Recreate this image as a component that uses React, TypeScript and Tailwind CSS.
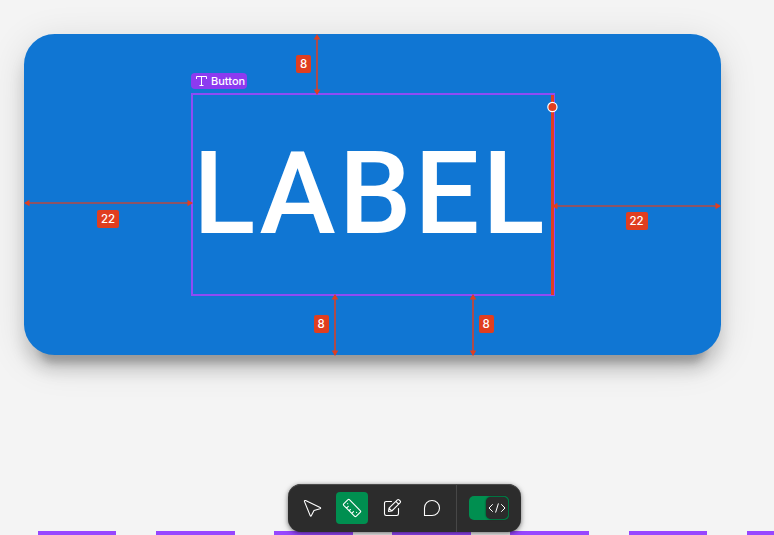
import type { ReactNode } from "react";

const RED = "#e03e1f";

function Badge({ children, className }: { children: ReactNode; className: string }) {
  return (
    <span
      className={`absolute flex h-[17.5px] items-center justify-center rounded-[2px] bg-[#e03e1f] pt-px font-['Inter'] text-[11.5px] font-medium text-white ${className}`}
    >
      {children}
    </span>
  );
}

function VArrow({ length, className }: { length: number; className: string }) {
  return (
    <svg className={`absolute ${className}`} width="8" height={length} fill={RED}>
      <rect x="3" y="3" width="2" height={length - 6} opacity="0.75" />
      <path d={`M4 0L7.3 5.5H0.7ZM4 ${length}L0.7 ${length - 5.5}H7.3Z`} />
    </svg>
  );
}

function HArrow({ length, className }: { length: number; className: string }) {
  return (
    <svg className={`absolute ${className}`} width={length} height="8" fill={RED}>
      <rect x="3" y="3.2" width={length - 6} height="1.6" opacity="0.75" />
      <path d={`M0 4L5.5 0.7V7.3ZM${length} 4L${length - 5.5} 0.7V7.3Z`} />
    </svg>
  );
}

function Tool({ active, children }: { active?: boolean; children: ReactNode }) {
  return (
    <button className={`flex size-8 items-center justify-center rounded-[4px] ${active ? "bg-[#008f50]" : ""}`}>
      <svg width="24" height="24" viewBox="0 0 24 24" fill="none" stroke="#fff" strokeWidth="1.1" strokeLinecap="round" strokeLinejoin="round">
        {children}
      </svg>
    </button>
  );
}

function Toolbar() {
  return (
    <div className="absolute top-[484px] left-[288px] flex h-12 w-[233px] items-center rounded-[13px] bg-[#2c2c2c] pl-2 shadow-[inset_0_1px_0_#4a4a4a,0_1px_4px_rgba(0,0,0,0.45),0_3px_8px_rgba(0,0,0,0.15)]">
      <div className="flex gap-2">
        <Tool>
          <path d="M4.5 5.6L10.2 19.6Q10.7 20.7 11.4 19.6L14 14.6L20 12.7Q21.2 12.2 20.1 11.5L5.6 4.6Q4.1 4.1 4.5 5.6Z" />
        </Tool>
        <Tool active>
          <path d="M8 3.7Q8.7 3.1 9.4 3.7L20.4 14.8Q21 15.5 20.4 16.1L16.1 20.3Q15.4 20.9 14.7 20.3L3.7 9.3Q3.1 8.6 3.7 7.9ZM6.6 12.1L8.3 10.4M9.2 14.7L10.4 13.5M11.8 17.3L13.5 15.6M7.7 7.6V7.7M16.6 16.4V16.5" />
        </Tool>
        <Tool>
          <path d="M11.5 5.5H6.2Q4.5 5.5 4.5 7.2V17.8Q4.5 19.5 6.2 19.5H16.8Q18.5 19.5 18.5 17.8V12.5M8.5 15.5L9 12.2L17.4 3.8Q18.2 3.1 19 3.8L20.2 5Q20.9 5.8 20.2 6.6L11.8 15L8.5 15.5ZM9 12.2L11.8 15M15.8 5.4L18.6 8.2" />
        </Tool>
        <Tool>
          <path d="M4.5 19.5V12A7.5 7.5 0 1 1 12 19.5Z" />
        </Tool>
      </div>
      <div className="ml-2 h-full w-px bg-[#474747]" />
      <div className="ml-3 flex h-6 w-10 justify-end rounded-[5px] bg-[#008f50] p-px">
        <div className="flex w-[22px] items-center justify-center rounded-[5px] bg-[#2c2c2c] shadow-[0_0_2px_rgba(0,0,0,0.7)]">
          <svg width="18" height="12" viewBox="0 0 18 12" fill="none" stroke="#fff" strokeWidth="1" strokeLinecap="round" strokeLinejoin="round">
            <path d="M4.5 2.5L1 6L4.5 9.5M13.5 2.5L17 6L13.5 9.5M10.3 1.8L7.7 10.2" />
          </svg>
        </div>
      </div>
    </div>
  );
}

export default function App() {
  return (
    <div className="relative flex h-[535px] w-[774px] flex-col overflow-hidden bg-[#f4f4f4]">
      <div className="relative mt-[33.7px] ml-[24.3px] h-[321.3px] w-[696.7px] shrink-0 rounded-[30.6px] bg-[#1076d3] pt-[59.3px] pl-[166.5px] shadow-[0_23px_7.6px_-15.3px_rgba(0,0,0,0.2),0_15.3px_15.3px_0_rgba(0,0,0,0.14),0_7.6px_38px_0_rgba(0,0,0,0.12)]">
        <div className="h-[203px] w-[364px] border-2 border-[#8f4bf5] pl-[0.5px] font-['Roboto'] text-[114.8px] leading-[198px] font-medium tracking-[3.2px] text-white">
          LABEL
        </div>
      </div>
      <div className="mt-auto flex h-[4px] shrink-0 gap-[39.5px] pl-[37.7px]">
        {[0, 1, 2, 3, 4, 5, 6].map((n) => (
          <div key={n} className="w-[78.7px] shrink-0 bg-[#9747ff]" />
        ))}
      </div>

      <div className="absolute top-[73px] left-[191px] flex h-4 w-14 items-center rounded-[4px] bg-[#8c3bf0] pl-[5px] font-['Inter'] text-[11px] font-medium text-white">
        <svg className="mr-[4px] shrink-0" width="11" height="12" fill="none" stroke="#fff">
          <path d="M0.5 4V1.5H10.5V4M5.5 1.5V10.5M3.5 10.5H7.5" />
        </svg>
        Button
      </div>

      <div className="absolute top-[95px] left-[551px] h-[200px] w-[2.5px] bg-[#e03e1f]" />
      <VArrow length={61} className="top-[34px] left-[313px]" />
      <VArrow length={62} className="top-[294px] left-[331px]" />
      <VArrow length={62} className="top-[294px] left-[469px]" />
      <HArrow length={169} className="top-[199px] left-[24px]" />
      <HArrow length={169} className="top-[202px] left-[552px]" />
      <svg className="absolute top-[101px] left-[546px]" width="13" height="12">
        <circle cx="6.4" cy="6" r="4.6" fill={RED} stroke="#fff" strokeWidth="1.2" />
      </svg>

      <Badge className="top-[55px] left-[296px] w-[15px]">8</Badge>
      <Badge className="top-[315px] left-[313.7px] w-[15px]">8</Badge>
      <Badge className="top-[315px] left-[478.7px] w-[15px]">8</Badge>
      <Badge className="top-[210px] left-[97px] w-[22px]">22</Badge>
      <Badge className="top-[212.4px] left-[625.5px] w-[22px]">22</Badge>
      <Toolbar />
    </div>
  );
}
